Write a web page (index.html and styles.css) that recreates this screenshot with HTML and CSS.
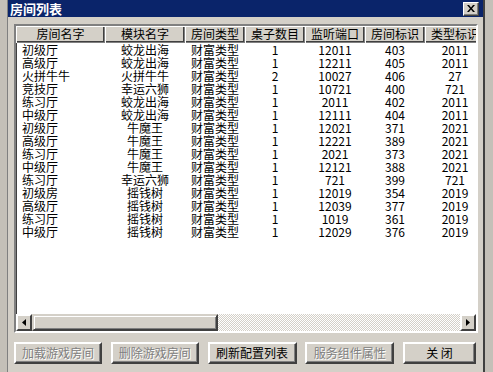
FILE: index.html
```html
<!DOCTYPE html>
<html lang="zh-CN">
<head>
    <meta charset="UTF-8">
    <title>房间列表</title>
    <link rel="stylesheet" href="styles.css">
</head>
<body>
    <div class="window">
        <div class="titlebar">
            <span class="title">房间列表</span>
            <span class="close-btn">
                <svg width="8" height="7" viewBox="0 0 8 7"><path d="M0 0h2l2 2.5L6 0h2L5 3.5 8 7H6L4 4.5 2 7H0l3-3.5z" fill="#000"/></svg>
            </span>
        </div>
        <div class="body">
            <div class="listview">
                <div class="list-content">
                    <div class="row header">
                        <div>房间名字</div>
                        <div>模块名字</div>
                        <div>房间类型</div>
                        <div>桌子数目</div>
                        <div>监听端口</div>
                        <div>房间标识</div>
                        <div>类型标识</div>
                    </div>
                    <div class="row"><div>初级厅</div><div>蛟龙出海</div><div>财富类型</div><div>1</div><div>12011</div><div>403</div><div>2011</div></div>
                    <div class="row"><div>高级厅</div><div>蛟龙出海</div><div>财富类型</div><div>1</div><div>12211</div><div>405</div><div>2011</div></div>
                    <div class="row"><div>火拼牛牛</div><div>火拼牛牛</div><div>财富类型</div><div>2</div><div>10027</div><div>406</div><div>27</div></div>
                    <div class="row"><div>竞技厅</div><div>幸运六狮</div><div>财富类型</div><div>1</div><div>10721</div><div>400</div><div>721</div></div>
                    <div class="row"><div>练习厅</div><div>蛟龙出海</div><div>财富类型</div><div>1</div><div>2011</div><div>402</div><div>2011</div></div>
                    <div class="row"><div>中级厅</div><div>蛟龙出海</div><div>财富类型</div><div>1</div><div>12111</div><div>404</div><div>2011</div></div>
                    <div class="row"><div>初级厅</div><div>牛魔王</div><div>财富类型</div><div>1</div><div>12021</div><div>371</div><div>2021</div></div>
                    <div class="row"><div>高级厅</div><div>牛魔王</div><div>财富类型</div><div>1</div><div>12221</div><div>389</div><div>2021</div></div>
                    <div class="row"><div>练习厅</div><div>牛魔王</div><div>财富类型</div><div>1</div><div>2021</div><div>373</div><div>2021</div></div>
                    <div class="row"><div>中级厅</div><div>牛魔王</div><div>财富类型</div><div>1</div><div>12121</div><div>388</div><div>2021</div></div>
                    <div class="row"><div>练习厅</div><div>幸运六狮</div><div>财富类型</div><div>1</div><div>721</div><div>399</div><div>721</div></div>
                    <div class="row"><div>初级房</div><div>摇钱树</div><div>财富类型</div><div>1</div><div>12019</div><div>354</div><div>2019</div></div>
                    <div class="row"><div>高级厅</div><div>摇钱树</div><div>财富类型</div><div>1</div><div>12039</div><div>377</div><div>2019</div></div>
                    <div class="row"><div>练习厅</div><div>摇钱树</div><div>财富类型</div><div>1</div><div>1019</div><div>361</div><div>2019</div></div>
                    <div class="row"><div>中级厅</div><div>摇钱树</div><div>财富类型</div><div>1</div><div>12029</div><div>376</div><div>2019</div></div>
                </div>
                <div class="hscroll">
                    <div class="arrow-btn">
                        <svg width="4" height="7" viewBox="0 0 4 7"><path d="M4 0v7L0 3.5z" fill="#000"/></svg>
                    </div>
                    <div class="thumb"></div>
                    <div class="track"></div>
                    <div class="arrow-btn">
                        <svg width="4" height="7" viewBox="0 0 4 7"><path d="M0 0v7l4-3.5z" fill="#000"/></svg>
                    </div>
                </div>
            </div>
            <div class="buttons">
                <div class="btn disabled">加载游戏房间</div>
                <div class="btn disabled">删除游戏房间</div>
                <div class="btn wide">刷新配置列表</div>
                <div class="btn wide disabled">服务组件属性</div>
                <div class="btn close">关 闭</div>
            </div>
        </div>
    </div>
</body>
</html>
```

FILE: styles.css
```css
body {
    margin: 0;
    height: 372px;
    overflow: hidden;
    background-color: #c4c0b8;
    font-family: "Noto Sans CJK SC", "Liberation Sans", sans-serif;
    font-size: 12px;
    color: #000;
}

.window {
    margin-left: 7px;
    width: 475px;
    height: 372px;
    border-left: 1px solid #808080;
    border-right: 2px solid #404040;
    background-color: #d4d0c8;
}

.titlebar {
    height: 17px;
    background-color: #0a246a;
    display: flex;
    align-items: center;
    justify-content: space-between;
    padding: 0 4px 0 2px;
}

    .titlebar .title {
        color: #fff;
        font-weight: bold;
        font-size: 13px;
        line-height: 17px;
    }

.close-btn {
    width: 14px;
    height: 12px;
    background-color: #d4d0c8;
    border: 1px solid;
    border-color: #fff #404040 #404040 #fff;
    box-shadow: inset -1px -1px 0 #808080;
    display: flex;
    align-items: center;
    justify-content: center;
}

.body {
    padding: 7px 5px 0 6px;
}

.listview {
    width: 460px;
    height: 305px;
    border: 2px solid;
    border-color: #808080 #fff #fff #808080;
    box-shadow: inset 1px 1px 0 #404040;
    background-color: #fff;
    display: flex;
    flex-direction: column;
}

.list-content {
    flex: 1;
    overflow: hidden;
}

.row {
    display: grid;
    grid-template-columns: 89px 80px 60px 60px 60px 60px 60px;
    height: 13px;
    line-height: 13px;
    white-space: nowrap;
}

    .row div {
        text-align: center;
    }

    .row div:first-child {
        text-align: left;
        padding-left: 6px;
    }

.row.header {
    height: 17px;
    line-height: 16px;
    background-color: #d4d0c8;
}

    .row.header div {
        text-align: center;
        padding-left: 0;
        box-shadow: inset 1px 1px 0 #fff, inset -1px -1px 0 #808080, inset -2px -2px 0 #404040;
    }

.hscroll {
    height: 17px;
    display: flex;
}

.arrow-btn {
    width: 12px;
    height: 13px;
    background-color: #d4d0c8;
    border: 2px solid;
    border-color: #fff #404040 #404040 #fff;
    display: flex;
    align-items: center;
    justify-content: center;
}

.thumb {
    width: 182px;
    height: 13px;
    background-color: #d4d0c8;
    border: 2px solid;
    border-color: #d4d0c8 #404040 #404040 #d4d0c8;
    box-shadow: inset 1px 1px 0 #fff, inset -1px -1px 0 #808080;
}

.track {
    flex: 1;
    background: repeating-conic-gradient(#d4d0c8 0 25%, #fff 0 50%) 0 0 / 2px 2px;
}

.buttons {
    display: flex;
    justify-content: space-between;
    width: 462px;
    margin-top: 9px;
}

.btn {
    width: 84px;
    height: 18px;
    line-height: 18px;
    text-align: center;
    background-color: #d4d0c8;
    border: 2px solid;
    border-color: #fff #404040 #404040 #fff;
    box-shadow: inset -1px -1px 0 #808080;
}

.btn.wide {
    width: 85px;
}

.btn.close {
    width: 69px;
}

.btn.disabled {
    color: #808080;
    text-shadow: 1px 1px 0 #fff;
}
```
